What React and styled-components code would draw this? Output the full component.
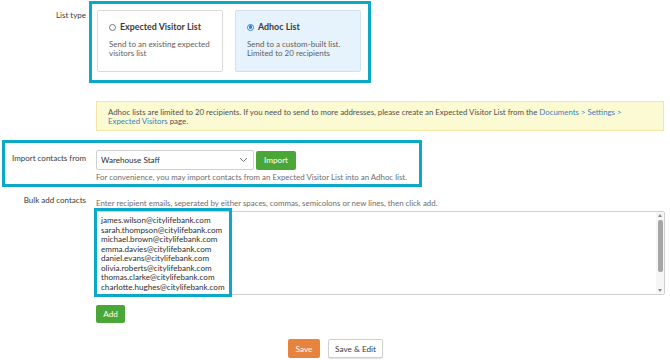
import React from "react";
import styled, { createGlobalStyle } from "styled-components";

const Global = createGlobalStyle`
  html, body { margin: 0; padding: 0; background: #fff; }
  body { font-family: Lato, "Open Sans", Arial, sans-serif; color: #3a3a3a; font-size: 8px; }
  * { box-sizing: border-box; }
`;

const CYAN = "#0ba8c8";

const Page = styled.div`
  width: 670px;
  height: 363px;
  padding-top: 1px;
  display: flex;
  flex-direction: column;
  overflow: hidden;
`;

const Row = styled.div`
  display: grid;
  grid-template-columns: ${p => p.$labelW || 86}px auto;
  column-gap: ${p => p.$gap ?? 10}px;
  align-items: start;
  margin-top: ${p => p.$mt || 0}px;
`;

const Label = styled.div`
  text-align: right;
  font-size: 8px;
  color: #3a3a3a;
  padding-top: ${p => p.$pt || 0}px;
  line-height: 10px;
`;

const Highlight = styled.div`
  border: 3px solid ${CYAN};
  padding: ${p => p.$pad};
  width: fit-content;
`;

const Cards = styled.div`
  display: flex;
  gap: 12px;
`;

const Card = styled.div`
  width: 126px;
  height: 62px;
  border: 1px solid ${p => (p.$active ? "#cfe2f1" : "#d9d9d9")};
  background: ${p => (p.$active ? "#e6f2fc" : "#fff")};
  border-radius: 2px;
  padding: 11px 8px 0 11px;
`;

const CardTitle = styled.div`
  display: flex;
  align-items: center;
  gap: 4px;
  font-weight: 700;
  font-size: 8.9px;
  color: #3a3a3a;
  line-height: 10px;
`;

const Radio = styled.span`
  width: 7px;
  height: 7px;
  border-radius: 50%;
  border: 1px solid ${p => (p.$on ? "#2f7ee0" : "#777")};
  background: #fff;
  display: inline-flex;
  align-items: center;
  justify-content: center;
  &::after {
    content: "";
    width: 3.5px;
    height: 3.5px;
    border-radius: 50%;
    background: ${p => (p.$on ? "#2f7ee0" : "transparent")};
  }
`;

const CardText = styled.div`
  margin-top: 8px;
  font-size: 8px;
  line-height: 9.3px;
  color: #5e5e5e;
`;

const Alert = styled.div`
  margin: 18px 6px 0 96px;
  height: 30px;
  background: #fcfad2;
  border: 1px solid #f4e7a6;
  padding: 6px 12px 0 11px;
  font-size: 7.85px;
  line-height: 9.3px;
  color: #505050;
`;

const Link = styled.a`
  color: #3d7fc0;
  text-decoration: none;
`;

const ImportBox = styled.div`
  margin: 9px 0 0 2px;
  border: 3px solid ${CYAN};
  width: 420px;
  height: 47px;
  padding-top: 7px;
`;

const Controls = styled.div`
  display: flex;
  gap: 2px;
  align-items: center;
`;

const Select = styled.div`
  width: 158px;
  height: 20px;
  border: 1px solid #d0d0d0;
  border-radius: 2px;
  background: #fff;
  display: flex;
  align-items: center;
  justify-content: space-between;
  padding: 0 5px 0 4px;
  font-size: 8.1px;
  color: #2e2e2e;
`;

const Button = styled.button`
  font-family: Lato, Arial, sans-serif;
  font-size: 8.2px;
  height: ${p => p.$h || 19}px;
  width: ${p => p.$w}px;
  padding: 0;
  border-radius: 2px;
  border: 1px solid ${p => (p.$kind === "ghost" ? "#cfcfcf" : "transparent")};
  background: ${p =>
    p.$kind === "green" ? "#4aa737" : p.$kind === "orange" ? "#e8833e" : "#fff"};
  color: ${p => (p.$kind === "ghost" ? "#3a3a3a" : "#fff")};
  box-shadow: ${p => (p.$kind === "ghost" ? "0 1px 1px rgba(0,0,0,0.12)" : "none")};
`;

const Help = styled.div`
  font-size: 7.9px;
  color: #6e6e6e;
  line-height: 10px;
  white-space: nowrap;
  margin-top: ${p => p.$mt || 0}px;
`;

const TextBox = styled.div`
  position: relative;
  margin-top: 3px;
  width: 569px;
  height: 84px;
  border: 1px solid #cfcfcf;
  border-radius: 2px;
  display: flex;
`;

const Emails = styled.div`
  flex: 1;
  padding: 4px 4px 0 4px;
  font-size: 8.1px;
  line-height: 9.55px;
  color: #2e2e2e;
  white-space: pre;
`;

const Scroll = styled.div`
  width: 8px;
  display: flex;
  flex-direction: column;
  align-items: center;
  padding: 2px 0;
  background: #f6f6f6;
`;

const Thumb = styled.div`
  width: 5px;
  height: 52px;
  margin-top: 3px;
  background: #a6a6a6;
  border-radius: 2px;
`;

const Arrow = styled.div`
  width: 0;
  height: 0;
  border-left: 2.5px solid transparent;
  border-right: 2.5px solid transparent;
  ${p => (p.$down ? "border-top: 3px solid #888;" : "border-bottom: 3px solid #888;")}
  margin-top: ${p => (p.$down ? "auto" : "0")};
`;

const EmailMark = styled.div`
  position: absolute;
  left: -3px;
  top: -4px;
  width: 138px;
  height: 89px;
  border: 3px solid ${CYAN};
  pointer-events: none;
`;

const AddButton = styled(Button)`
  margin-top: 10px;
`;

const Footer = styled.div`
  display: flex;
  justify-content: center;
  gap: 8px;
  margin-top: 16px;
  padding-left: 1px;
`;

const emails = [
  "james.wilson@citylifebank.com",
  "sarah.thompson@citylifebank.com",
  "michael.brown@citylifebank.com",
  "emma.davies@citylifebank.com",
  "daniel.evans@citylifebank.com",
  "olivia.roberts@citylifebank.com",
  "thomas.clarke@citylifebank.com",
  "charlotte.hughes@citylifebank.com",
];

export default function App() {
  return (
    <Page>
      <Global />
      <Row $gap={3}>
        <Label $pt={9}>List type</Label>
        <Highlight $pad="6px 7px 8px 5px">
          <Cards>
            <Card>
              <CardTitle>
                <Radio />
                Expected Visitor List
              </CardTitle>
              <CardText>
                Send to an existing expected
                <br />
                visitors list
              </CardText>
            </Card>
            <Card $active>
              <CardTitle>
                <Radio $on />
                Adhoc List
              </CardTitle>
              <CardText>
                Send to a custom-built list.
                <br />
                Limited to 20 recipients
              </CardText>
            </Card>
          </Cards>
        </Highlight>
      </Row>

      <Alert>
        Adhoc lists are limited to 20 recipients. If you need to send to more addresses, please create an
        Expected Visitor List from the <Link>Documents &gt; Settings &gt;</Link>
        <br />
        <Link>Expected Visitors</Link> page.
      </Alert>

      <ImportBox>
        <Row $labelW={81}>
          <Label $pt={3}>Import contacts from</Label>
          <div>
            <Controls>
              <Select>
                Warehouse Staff
                <svg width="9" height="6" viewBox="0 0 9 6">
                  <path d="M1 1l3.5 3.5L8 1" fill="none" stroke="#666" strokeWidth="0.9" />
                </svg>
              </Select>
              <Button $kind="green" $w={40}>Import</Button>
            </Controls>
            <Help $mt={2}>
              For convenience, you may import contacts from an Expected Visitor List into an Adhoc list.
            </Help>
          </div>
        </Row>
      </ImportBox>

      <Row $mt={8}>
        <Label $pt={0}>Bulk add contacts</Label>
        <div>
          <Help $mt={3}>
            Enter recipient emails, seperated by either spaces, commas, semicolons or new lines, then click add.
          </Help>
          <TextBox>
            <Emails>{emails.join("\n")}</Emails>
            <Scroll>
              <Arrow />
              <Thumb />
              <Arrow $down />
            </Scroll>
            <EmailMark />
          </TextBox>
          <AddButton $kind="green" $w={29} $h={18}>Add</AddButton>
        </div>
      </Row>

      <Footer>
        <Button $kind="orange" $w={32}>Save</Button>
        <Button $kind="ghost" $w={55}>Save &amp; Edit</Button>
      </Footer>
    </Page>
  );
}
